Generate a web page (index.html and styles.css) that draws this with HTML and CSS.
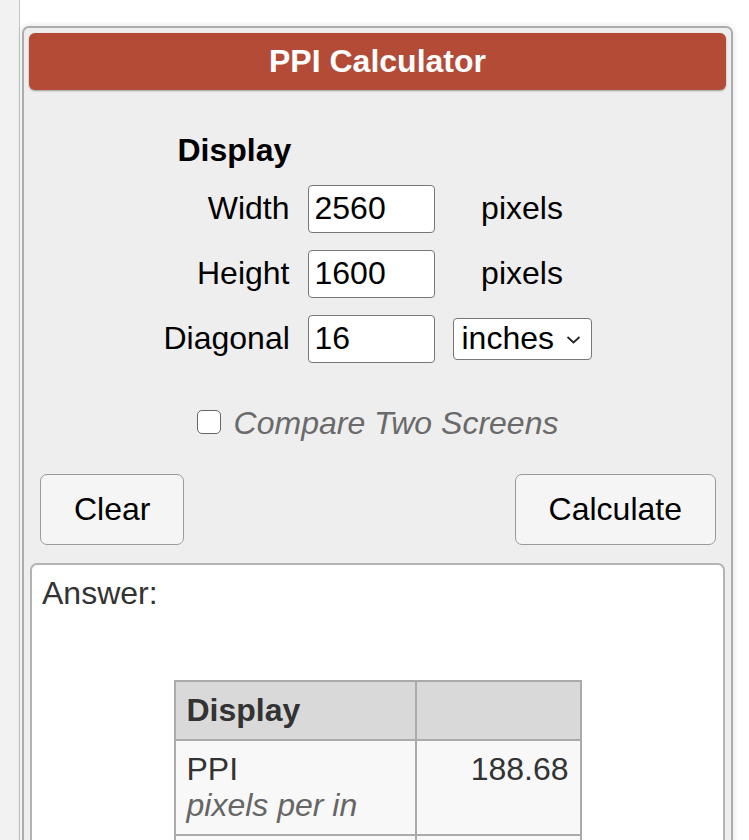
FILE: index.html
```html
<!DOCTYPE html>
<html lang="en">
<head>
<meta charset="utf-8">
<title>PPI Calculator</title>
<link rel="stylesheet" href="styles.css">
</head>
<body>
<div class="page">
  <aside class="side"></aside>
  <main class="main">
    <section class="panel">
      <h1 class="panel-title">PPI Calculator</h1>
      <form class="calc-form" onsubmit="return false">
        <div class="form-grid">
          <div class="grid-heading">Display</div>

          <label class="f-label" for="w">Width</label>
          <input class="f-input" id="w" type="text" value="2560">
          <span class="f-unit">pixels</span>

          <label class="f-label" for="h">Height</label>
          <input class="f-input" id="h" type="text" value="1600">
          <span class="f-unit">pixels</span>

          <label class="f-label" for="d">Diagonal</label>
          <input class="f-input" id="d" type="text" value="16">
          <span class="select-wrap">
            <select class="f-select">
              <option>inches</option>
              <option>cm</option>
            </select>
            <svg class="chev" width="15" height="9" viewBox="0 0 15 9" aria-hidden="true"><path d="M1.5 2 L7.5 7.5 L13.5 2" fill="none" stroke="#222" stroke-width="1.7"/></svg>
          </span>
        </div>

        <label class="compare">
          <span class="cbox"></span>
          <span class="compare-text">Compare Two Screens</span>
        </label>

        <div class="btn-row">
          <button class="btn" type="button">Clear</button>
          <button class="btn" type="button">Calculate</button>
        </div>
      </form>

      <div class="answer">
        <div class="answer-label">Answer:</div>
        <table class="result">
          <thead>
            <tr><th class="c1">Display</th><th class="c2"></th></tr>
          </thead>
          <tbody>
            <tr>
              <td class="c1">PPI<br><i class="sub">pixels per in</i></td>
              <td class="c2 num">188.68</td>
            </tr>
            <tr>
              <td class="c1">&nbsp;</td>
              <td class="c2 num">&nbsp;</td>
            </tr>
          </tbody>
        </table>
      </div>
    </section>
  </main>
</div>
</body>
</html>
```
FILE: styles.css
```css
html, body {
  margin: 0;
  padding: 0;
  background: #fff;
  overflow: hidden;
}
body {
  font-family: "Liberation Sans", Arial, sans-serif;
  font-size: 32px;
  color: #000;
}
.page {
  display: flex;
  min-height: 840px;
}
.side {
  width: 19px;
  flex: none;
  background: #f2f2f2;
  border-right: 1px solid #c4c4c4;
}
.main {
  padding: 26px 0 0 2px;
}
.panel {
  width: 697px;
  background: #eee;
  border: 2px solid #acacac;
  border-radius: 7px;
  padding: 5px;
  box-shadow: 0 0 6px rgba(0, 0, 0, 0.14);
  min-height: 900px;
}
.panel-title {
  margin: 0;
  height: 57px;
  line-height: 57px;
  text-align: center;
  background: #b34b37;
  color: #fff;
  font-size: 32px;
  font-weight: bold;
  border-radius: 6px;
  box-shadow: 0 1px 2px rgba(0, 0, 0, 0.35);
}
.calc-form {
  padding-top: 43px;
}
.form-grid {
  display: grid;
  grid-template-columns: 126px 127px 139px;
  grid-auto-rows: 48px;
  grid-template-rows: 35px;
  column-gap: 18px;
  row-gap: 17px;
  justify-content: center;
  align-items: center;
}
.grid-heading {
  grid-column: 1 / 4;
  padding-left: 14px;
  font-weight: bold;
  line-height: 35px;
  align-self: start;
}
.f-label {
  text-align: right;
  white-space: nowrap;
  padding-bottom: 2px;
}
.f-input {
  box-sizing: border-box;
  width: 127px;
  height: 48px;
  margin: 0;
  padding: 0 0 2px 6px;
  font: inherit;
  color: #000;
  background: #fff;
  border: 1.5px solid #777;
  border-radius: 4px;
  outline: none;
}
.f-unit {
  text-align: center;
  padding-bottom: 2px;
}
.select-wrap {
  position: relative;
  display: block;
  width: 139px;
  height: 42px;
}
.f-select {
  box-sizing: border-box;
  width: 139px;
  height: 42px;
  margin: 0;
  padding: 0 0 2px 8px;
  font: inherit;
  color: #000;
  background: #fff;
  border: 1.5px solid #777;
  border-radius: 4px;
  -webkit-appearance: none;
  appearance: none;
  outline: none;
}
.chev {
  position: absolute;
  right: 11px;
  top: 17px;
  pointer-events: none;
}
.compare {
  display: flex;
  justify-content: center;
  align-items: center;
  gap: 13px;
  margin-top: 42px;
  line-height: 36px;
}
.cbox {
  box-sizing: border-box;
  width: 24px;
  height: 24px;
  border: 1.5px solid #666;
  border-radius: 5px;
  background: #fff;
  margin-top: -2px;
}
.compare-text {
  font-style: italic;
  color: #6a6a6a;
}
.btn-row {
  display: flex;
  justify-content: space-between;
  padding: 0 10px 0 11px;
  margin-top: 33px;
}
.btn {
  height: 71px;
  padding: 0 33px;
  font: inherit;
  color: #000;
  background: #f5f5f5;
  border: 1.5px solid #9a9a9a;
  border-radius: 7px;
  cursor: pointer;
}
.answer {
  margin: 18px 1px 0;
  background: #fff;
  border: 2px solid #b3b3b3;
  border-radius: 7px;
  padding: 10px 10px 40px;
  color: #333;
  min-height: 400px;
}
.answer-label {
  line-height: 36px;
}
.result {
  margin: 69px auto 0;
  border-collapse: collapse;
  color: #333;
  background: #f8f8f8;
}
.result th,
.result td {
  border: 2px solid #aaa;
  padding: 10px 11px 11px;
  line-height: 36px;
  vertical-align: top;
  text-align: left;
}
.result th {
  background: #d9d9d9;
  font-weight: bold;
}
.result .c1 {
  width: 217px;
}
.result .c2 {
  width: 141px;
}
.result .num {
  text-align: right;
}
.sub {
  color: #666;
}
```
